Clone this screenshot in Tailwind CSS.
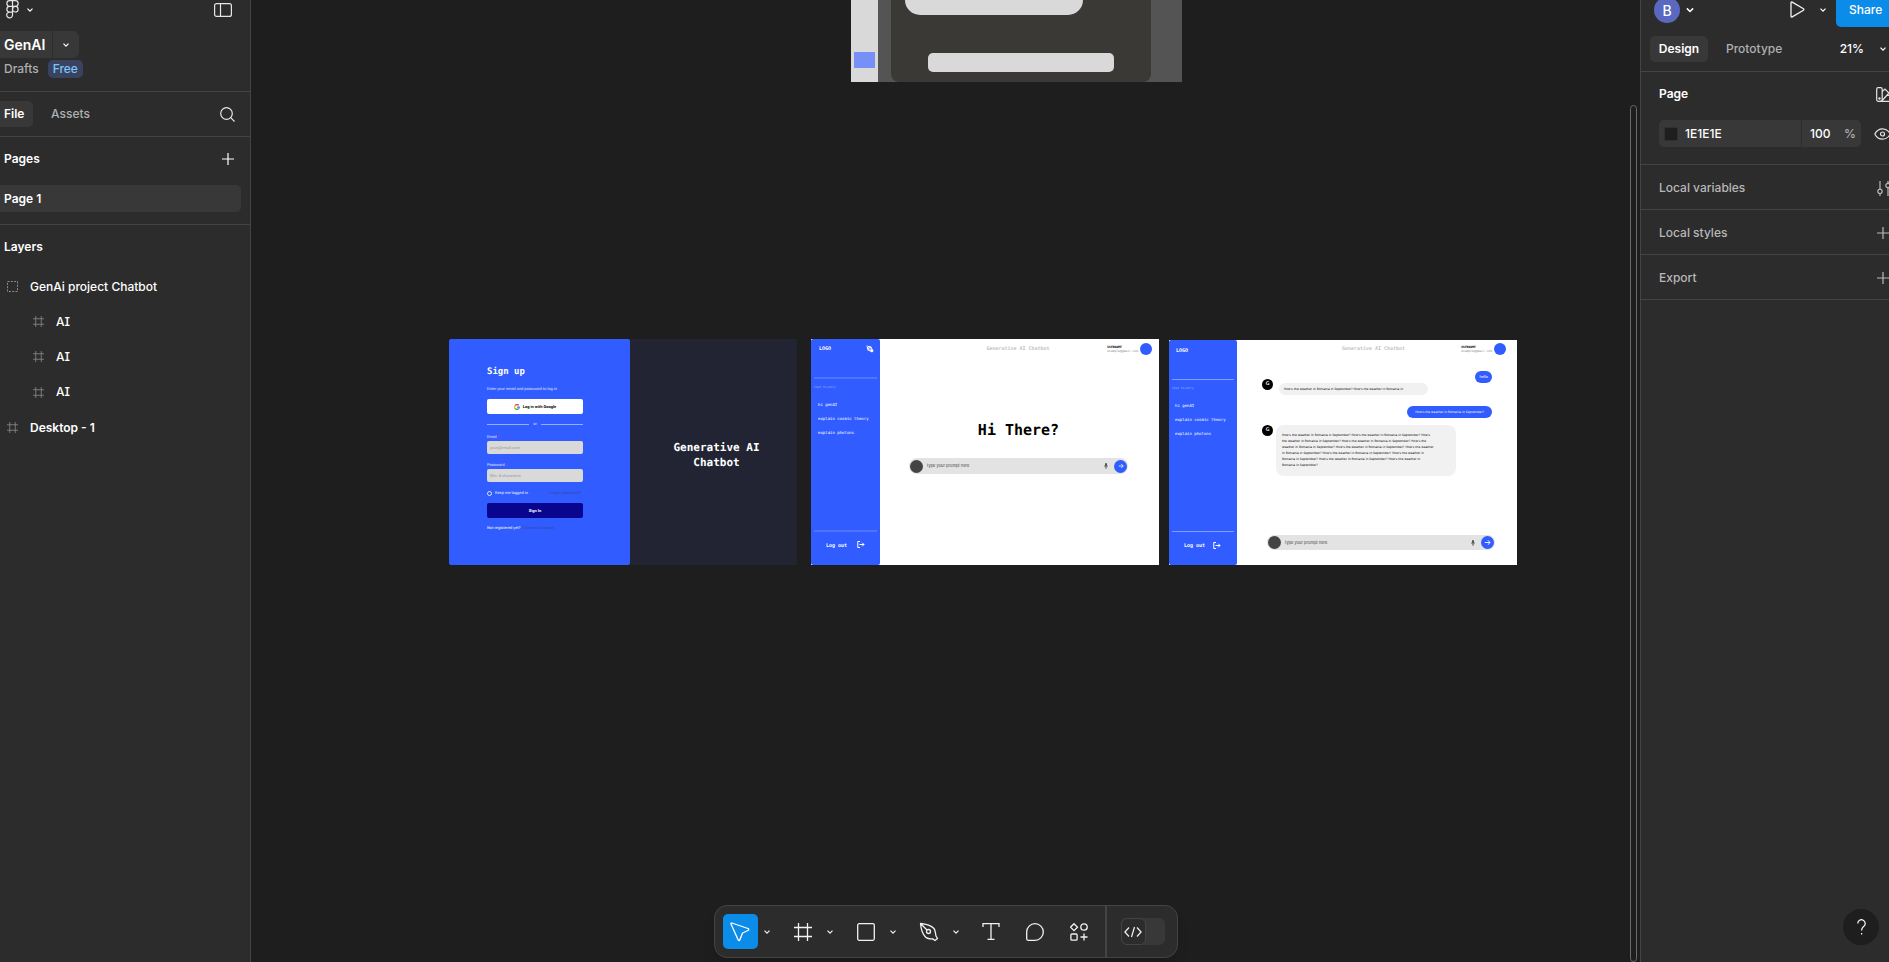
<!DOCTYPE html>
<html lang="en">
<head>
<meta charset="utf-8">
<title>GenAI</title>
<script src="https://cdn.jsdelivr.net/npm/@tailwindcss/browser@4"></script>
</head>
<body class="h-screen flex overflow-hidden bg-[#1e1e1e] text-white text-[12px] font-['Inter',sans-serif] font-medium">
<svg class="hidden">
  <symbol id="chev" viewBox="0 0 8 8"><path d="M1.500 2.700 4 5.200 6.500 2.700" fill="none" stroke="currentColor" stroke-width="1.200"/></symbol>
  <symbol id="plus" viewBox="0 0 14 14"><path d="M7 1v12M1 7h12" fill="none" stroke="currentColor" stroke-width="1.200"/></symbol>
  <symbol id="hash" viewBox="0 0 18 18"><path d="M4.500 0v18M13.500 0v18M0 4.500h18M0 13.500h18" fill="none" stroke="currentColor" stroke-width="1.300"/></symbol>
  <symbol id="pen" viewBox="0 0 20 20"><path d="M1.500 1.500C7 2 12 3.500 15 6.500c1.500 2 1.500 5 2 7.500l1.500 2.500-2.500 2-2-1.500c-2.500 0-5.500 0-7.500-2C3.500 12 2 7 1.500 1.500Zm0 0L8 8" fill="none" stroke="currentColor" stroke-width="1.300" stroke-linejoin="round"/><circle cx="9.500" cy="9.500" r="2" fill="none" stroke="currentColor" stroke-width="1.300"/></symbol>
  <symbol id="nib" viewBox="0 0 20 20"><path d="M1 1 13 4l4 8 2 3-4 4-3-2-8-4Z" fill="currentColor"/><path d="m2 2 7 7" stroke="#315cff" stroke-width="1.500"/><circle cx="10" cy="10" r="2.500" fill="none" stroke="#315cff" stroke-width="1.500"/></symbol>
  <symbol id="exit" viewBox="0 0 16 14"><path d="M6 1H1.500v12H6M5 7h9M10.500 3.500 14 7l-3.500 3.500" fill="none" stroke="currentColor" stroke-width="2"/></symbol>
  <symbol id="mic" viewBox="0 0 8 12"><rect x="2.200" y="0" width="3.600" height="7" rx="1.800" fill="currentColor"/><path d="M.8 5a3.200 3.200 0 0 0 6.400 0M4 8v4" fill="none" stroke="currentColor" stroke-width="1.300"/></symbol>
  <symbol id="arrow" viewBox="0 0 12 12"><path d="M1.500 6h9M6.500 2l4 4-4 4" fill="none" stroke="currentColor" stroke-width="1.500"/></symbol>
</svg>

<!-- Left panel -->
<aside class="w-[251px] shrink-0 bg-[#2c2c2c] border-r border-[#444] flex flex-col">
  <header class="border-b border-[#444] pb-[13px]">
    <div class="h-[31px] pl-1.5 pr-[18px] pb-3 flex items-center">
      <button aria-label="Main menu" class="flex items-center gap-[7px]">
        <svg class="w-[13px] h-[19px]" viewBox="0 0 13 19" fill="none" stroke="#e6e6e6" stroke-width="1.200"><path d="M6.500.700H3.700a2.800 2.800 0 0 0 0 5.700h2.800ZM6.500.700h2.800a2.800 2.800 0 0 1 0 5.700H6.500ZM6.500 6.400H3.700a2.800 2.800 0 0 0 0 5.700h2.800ZM6.500 12.100H3.700a2.900 2.900 0 1 0 2.800 2.900Z"/><circle cx="9.300" cy="9.200" r="2.800"/></svg>
        <svg class="size-2"><use href="#chev"/></svg>
      </button>
      <button aria-label="Minimize UI" class="ml-auto"><svg class="w-[18px] h-[14px]" viewBox="0 0 18 14" fill="none" stroke="#e6e6e6" stroke-width="1.200"><rect x=".6" y=".6" width="16.800" height="12.800" rx="2"/><path d="M6.500.600v12.800"/></svg></button>
    </div>
    <div class="flex gap-px h-[27px]">
      <button class="w-[52px] bg-[#383838] text-[14px] font-semibold text-left pl-1">GenAI</button>
      <button aria-label="File menu" class="w-[26px] rounded-r-md bg-[#383838] flex items-center justify-center"><svg class="size-2"><use href="#chev"/></svg></button>
    </div>
    <div class="mt-0.5 h-[18px] flex items-center pl-1 gap-[9px]">
      <a href="#drafts" class="text-[#b0b0b0]">Drafts</a>
      <span class="h-[18px] px-[5px] rounded-[5px] bg-[#394360] text-[#7cc4f8] leading-[18px]">Free</span>
    </div>
  </header>
  <div class="h-[45px] border-b border-[#444] flex items-center pr-[15px]">
    <button class="h-[26px] w-[33px] rounded-r-[5px] bg-[#383838] pl-1 text-left font-semibold">File</button>
    <button class="ml-[18px] text-[#b0b0b0]">Assets</button>
    <button aria-label="Search" class="ml-auto"><svg class="size-[15px]" viewBox="0 0 15 15" fill="none" stroke="#e6e6e6" stroke-width="1.200"><circle cx="6.500" cy="6.500" r="5.800"/><path d="m10.700 10.700 3.800 3.800"/></svg></button>
  </div>
  <section class="border-b border-[#444] pb-3">
    <div class="h-12 pb-1 flex items-center justify-between pl-1 pr-[15px]">
      <h2 class="font-semibold">Pages</h2>
      <button aria-label="Add page"><svg class="size-[14px]"><use href="#plus"/></svg></button>
    </div>
    <button class="h-[27px] w-[241px] pl-1 text-left rounded-r-[5px] bg-[#383838] font-semibold">Page 1</button>
  </section>
  <section>
    <h2 class="h-11 flex items-center pl-1 font-semibold">Layers</h2>
    <ul>
      <li class="h-[35px] flex items-center pl-[7px] gap-3"><svg class="size-[11px] text-[#8c8c8c]" viewBox="0 0 11 11"><rect x=".5" y=".5" width="10" height="10" fill="none" stroke="currentColor" stroke-dasharray="2 1.330"/></svg>GenAi project Chatbot</li>
      <li class="h-[35px] flex items-center pl-[33px] gap-3 [font-feature-settings:'cv08']"><svg class="size-[11px] text-[#8c8c8c]"><use href="#hash"/></svg>AI</li>
      <li class="h-[35px] flex items-center pl-[33px] gap-3 [font-feature-settings:'cv08']"><svg class="size-[11px] text-[#8c8c8c]"><use href="#hash"/></svg>AI</li>
      <li class="h-9 flex items-center pl-[33px] gap-3 [font-feature-settings:'cv08']"><svg class="size-[11px] text-[#8c8c8c]"><use href="#hash"/></svg>AI</li>
      <li class="h-[35px] flex items-center pl-[7px] gap-3 font-semibold"><svg class="size-[11px] text-[#8c8c8c]"><use href="#hash"/></svg>Desktop - 1</li>
    </ul>
  </section>
</aside>

<!-- Canvas -->
<main class="relative flex-1 min-w-0 overflow-hidden flex flex-col justify-end items-center pb-1">
  <!-- Desktop - 1 -->
  <div class="absolute left-[600px] top-0 w-[331px] h-[82px] bg-[#545454] flex">
    <div class="w-[27px] bg-[#d9d9d9] pt-[52px] pl-[3px]"><div class="w-[21px] h-4 bg-[#7790f8]"></div></div>
    <div class="ml-[13px] w-[260px] rounded-b-lg bg-[#3a3936]">
      <div class="ml-[14px] w-[178px] h-[15px] rounded-b-[15px] bg-[#d9d9d9]"></div>
      <div class="mt-[38px] ml-[37px] w-[186px] h-[19px] rounded-[5px] bg-[#d9d9d9]"></div>
    </div>
  </div>

  <!-- Sign up -->
  <div class="absolute left-[198px] top-[339px] w-[348px] h-[226px] bg-[#222433] flex text-[4px] font-normal font-['Roboto',sans-serif] [text-rendering:geometricPrecision]">
    <form class="w-[181px] rounded-[2px] bg-[#315cff] pt-[27px] pl-[38px] pr-[47px] flex flex-col leading-[6px]">
      <h3 class="text-[9px] leading-[12px] font-bold font-['DejaVu_Sans_Mono',monospace]">Sign up</h3>
      <p class="mt-2 text-white/80">Enter your email and password to log in</p>
      <button type="button" class="mt-[7px] h-[15px] rounded-[2px] bg-white text-black font-bold flex items-center justify-center gap-[3px]">
        <svg class="size-[6px]" viewBox="0 0 24 24" fill="none" stroke-width="5"><path d="M19 5a9.500 9.500 0 0 0-15 2" stroke="#ea4335"/><path d="M4 7a9.500 9.500 0 0 0 0 10" stroke="#fbbc05"/><path d="M4 17a9.500 9.500 0 0 0 14 2" stroke="#34a853"/><path d="M18 19a9 9 0 0 0 3.500-7H12" stroke="#4285f4"/></svg>Log in with Google</button>
      <div class="mt-[7px] flex items-center gap-1 text-white/80"><span class="h-px flex-1 bg-white/50"></span>or<span class="h-px flex-1 bg-white/50"></span></div>
      <label for="email" class="mt-[7px] text-white/80">Email<span class="text-red-600">*</span></label>
      <input id="email" type="email" placeholder="your@email.com" class="mt-px h-[13px] px-[3px] rounded-[2px] bg-[#d9d9d9] placeholder:text-[#999]">
      <label for="pw" class="mt-2 text-white/80">Password<span class="text-red-600">*</span></label>
      <input id="pw" type="password" placeholder="Min. 8 characters" class="mt-px h-[13px] px-[3px] rounded-[2px] bg-[#d9d9d9] placeholder:text-[#999]">
      <div class="mt-2 flex items-center justify-between pr-[2px]">
        <label class="flex items-center gap-[3px] text-white/90"><input type="checkbox" class="appearance-none size-[5px] rounded-full border border-white/80">Keep me logged in</label>
        <a href="#forgot" class="text-[#354a9c]">Forget password?</a>
      </div>
      <button type="button" class="mt-[7px] h-[15px] rounded-[2px] bg-[#09058f] font-bold">Sign In</button>
      <p class="mt-[7px]">Not registered yet? <a href="#create" class="text-[#354a9c]">Create an Account</a></p>
    </form>
    <div class="flex-1 flex items-center justify-center text-center pt-[5px] pl-[6px] text-[11px] leading-[15px] font-bold font-['DejaVu_Sans_Mono',monospace]">Generative AI<br>Chatbot</div>
  </div>

  <!-- Prompt screen -->
  <div class="absolute left-[560px] top-[339px] w-[348px] h-[226px] bg-white flex text-[4px] leading-[6px] font-normal font-['DejaVu_Sans_Mono',monospace] [text-rendering:geometricPrecision]">
    <div class="w-[69px] rounded-[2px] bg-[#315cff] flex flex-col">
      <div class="h-[38px] pt-[6px] pl-2 pr-[6px] flex justify-between text-[5px] font-bold"><span class="leading-[9px]">LOGO</span><svg class="size-2"><use href="#nib"/></svg></div>
      <div class="mx-[3px] h-[2px] bg-white/15"></div>
      <p class="mt-[5px] ml-[3px] text-[3px] text-white/50">Chat history</p>
      <ul class="mt-2 ml-[7px] leading-[14px] whitespace-nowrap"><li>hi genAI</li><li>explain cosmic theory</li><li>explain photons</li></ul>
      <div class="mt-auto mx-[3px] h-[2px] bg-white/15"></div>
      <button class="h-[33px] pb-2 pl-[15px] flex items-center gap-[10px] text-[5px] font-bold">Log out<svg class="w-2 h-[7px]"><use href="#exit"/></svg></button>
    </div>
    <div class="flex-1 flex flex-col text-black">
      <div class="grid grid-cols-[1fr_auto_1fr] items-center h-5 pr-[7px]">
        <span></span><span class="text-[5px] text-[#c4c4c4] font-bold pl-1">Generative AI Chatbot</span>
        <div class="flex justify-end items-center gap-[2px] text-[3px] leading-[4px]"><div><b>USERNAME</b><br><span class="text-[#888]">example@gmail.com</span></div><div class="size-3 rounded-full bg-[#315cff]"></div></div>
      </div>
      <h3 class="mt-[62px] pr-0.5 text-center text-[15px] leading-[18px] font-bold">Hi There?</h3>
      <div class="mt-[19px] ml-[29px] mr-[31px] h-4 rounded-full bg-[#e3e3e3] flex items-center px-px gap-1 font-['Inter',sans-serif]">
        <div class="size-[13px] rounded-full bg-[#444]"></div>
        <input aria-label="Prompt" placeholder="type your prompt here" class="flex-1 min-w-0 placeholder:text-[#444]">
        <svg class="w-1 h-[6px] mr-0.5 text-[#444]"><use href="#mic"/></svg>
        <button aria-label="Send" class="size-[13px] rounded-full bg-[#315cff] text-white flex items-center justify-center"><svg class="size-[6px]"><use href="#arrow"/></svg></button>
      </div>
    </div>
  </div>

  <!-- Conversation screen -->
  <div class="absolute left-[918px] top-[340px] w-[348px] h-[225px] bg-white flex text-[4px] leading-[6px] font-normal font-['DejaVu_Sans_Mono',monospace] [text-rendering:geometricPrecision]">
    <div class="w-[68px] rounded-[2px] bg-[#315cff] flex flex-col">
      <div class="h-[39px] pt-[7px] pl-[7px] text-[5px] font-bold"><span class="leading-[9px]">LOGO</span></div>
      <div class="mx-[3px] h-px bg-white/40"></div>
      <p class="mt-[5px] ml-[3px] text-[3px] text-white/50">Chat history</p>
      <ul class="mt-2 ml-[6px] leading-[14px] whitespace-nowrap"><li>hi genAI</li><li>explain cosmic theory</li><li>explain photons</li></ul>
      <div class="mt-auto mx-[3px] h-px bg-white/40"></div>
      <button class="h-[33px] pb-[7px] pl-[15px] flex items-center gap-2 text-[5px] font-bold">Log out<svg class="w-2 h-[7px]"><use href="#exit"/></svg></button>
    </div>
    <div class="flex-1 flex flex-col text-black">
      <div class="grid grid-cols-[1fr_auto_1fr] items-center h-[18px] pr-[11px]">
        <span></span><span class="text-[5px] text-[#c4c4c4] font-bold pl-1">Generative AI Chatbot</span>
        <div class="flex justify-end items-center gap-[2px] text-[3px] leading-[4px]"><div><b>USERNAME</b><br><span class="text-[#888]">example@gmail.com</span></div><div class="size-3 rounded-full bg-[#315cff]"></div></div>
      </div>
      <div class="flex flex-col pl-[25px] pr-[25px] pt-[13px] text-[3px] font-['DejaVu_Sans',sans-serif]">
        <div class="self-end h-3 px-1 rounded-full bg-[#315cff] text-white text-[4px] leading-[12px] font-['Lato',sans-serif]">hello</div>
        <div class="-mt-1 flex items-start gap-[6px]">
          <div class="size-[11px] rounded-full bg-black text-white text-[5px] leading-[11px] text-center font-bold font-['Lato',sans-serif]">G</div>
          <p class="mt-1 h-3 w-[149px] pl-[5px] rounded-full bg-[#f1f1f1] leading-[12px] whitespace-nowrap">How's the weather in Romania in September? How's the weather in Romania in</p>
        </div>
        <div class="mt-[11px] self-end h-3 px-2 rounded-full bg-[#315cff] text-white leading-[12px]">How's the weather in Romania in September?</div>
        <div class="mt-[7px] flex items-start gap-[3px]">
          <div class="size-[11px] rounded-full bg-black text-white text-[5px] leading-[11px] text-center font-bold font-['Lato',sans-serif]">G</div>
          <p class="h-[51px] w-[180px] pl-[6px] pt-[7px] rounded-[8px] bg-[#f1f1f1] whitespace-nowrap">How's the weather in Romania in September? How's the weather in Romania in September? How's<br>the weather in Romania in September? How's the weather in Romania in September? How's the<br>weather in Romania in September? How's the weather in Romania in September? How's the weather<br>in Romania in September? How's the weather in Romania in September? How's the weather in<br>Romania in September? How's the weather in Romania in September? How's the weather in<br>Romania in September?</p>
        </div>
      </div>
      <div class="mt-auto mb-[15px] ml-[30px] mr-[22px] h-[15px] rounded-full bg-[#e3e3e3] flex items-center px-px gap-1 font-['Inter',sans-serif]">
        <div class="size-[13px] rounded-full bg-[#444]"></div>
        <input aria-label="Message" placeholder="type your prompt here" class="flex-1 min-w-0 placeholder:text-[#444]">
        <svg class="w-1 h-[6px] mr-0.5 text-[#444]"><use href="#mic"/></svg>
        <button aria-label="Send" class="size-[13px] rounded-full bg-[#315cff] text-white flex items-center justify-center"><svg class="size-[7px]"><use href="#arrow"/></svg></button>
      </div>
    </div>
  </div>

  <div class="absolute right-[3px] top-[105px] bottom-0 w-[7px] rounded-full border border-[#6a6a6a]"></div>

  <!-- Toolbar -->
  <nav class="relative h-[53px] rounded-[13px] border border-[#444] bg-[#2c2c2c] flex items-center pl-2 pr-3 shadow-lg text-[#f2f2f2]">
    <button aria-label="Move" class="size-[35px] rounded-[5px] bg-[#0c8ce9] flex items-center justify-center"><svg class="size-5" viewBox="0 0 20 20" fill="none" stroke="#fff" stroke-width="1.300" stroke-linejoin="round"><path d="M1.800 1 18 6.500c1 .4 1 1.500 0 2L12.500 11l-2.600 6.800c-.4 1-1.400 1-1.800 0L1 2C.7 1.200 1.200.800 1.800 1Z"/></svg></button>
    <button aria-label="Move tools" class="w-[18px] flex justify-center"><svg class="size-2"><use href="#chev"/></svg></button>
    <button aria-label="Frame" class="ml-[18px] w-[18px]"><svg class="size-[18px]"><use href="#hash"/></svg></button>
    <button aria-label="Frame tools" class="w-[36px] flex justify-center"><svg class="size-2"><use href="#chev"/></svg></button>
    <button aria-label="Rectangle" class="ml-[9px] w-[18px]"><svg class="size-[18px]" viewBox="0 0 18 18"><rect x=".7" y=".7" width="16.600" height="16.600" rx="1.500" fill="none" stroke="currentColor" stroke-width="1.300"/></svg></button>
    <button aria-label="Shape tools" class="w-[36px] flex justify-center"><svg class="size-2"><use href="#chev"/></svg></button>
    <button aria-label="Pen" class="ml-2 w-5"><svg class="size-5"><use href="#pen"/></svg></button>
    <button aria-label="Pen tools" class="w-[34px] flex justify-center"><svg class="size-2"><use href="#chev"/></svg></button>
    <button aria-label="Text" class="ml-[9px] w-[18px]"><svg class="w-[18px] h-[17px]" viewBox="0 0 18 17" fill="none" stroke="currentColor" stroke-width="1.300"><path d="M1 4V.700h16V4M9 .700v15.600M5.500 16.300h7"/></svg></button>
    <button aria-label="Comment" class="ml-[26px] w-[18px]"><svg class="size-[18px]" viewBox="0 0 18 18" fill="none" stroke="currentColor" stroke-width="1.300"><path d="M9 .700a8.300 8.300 0 0 1 0 16.600H2.200A1.500 1.500 0 0 1 .700 15.800V9A8.300 8.300 0 0 1 9 .700Z"/></svg></button>
    <button aria-label="Actions" class="ml-[26px] w-[18px]"><svg class="size-[18px]" viewBox="0 0 18 18" fill="none" stroke="currentColor" stroke-width="1.300"><path d="m4 .700 3.500 3.500L4 7.700.500 4.200ZM14 10.500v7M10.500 14h7"/><circle cx="14" cy="4" r="3.200"/><rect x=".9" y="11" width="6.200" height="6.200" rx="1"/></svg></button>
    <span class="ml-[17px] w-0.5 h-full bg-[#444]"></span>
    <button aria-label="Dev Mode" role="switch" aria-checked="false" class="ml-[14px] w-[44px] h-[27px] rounded-md bg-[#383838] flex"><span class="w-[25px] h-[27px] rounded-md bg-[#2c2c2c] border border-[#444] flex items-center justify-center"><svg class="w-[18px] h-3" viewBox="0 0 18 12" fill="none" stroke="#f2f2f2" stroke-width="1.200"><path d="M5 1.500.900 6 5 10.500M13 1.500 17.100 6 13 10.500M10.500 1l-3 10"/></svg></span></button>
  </nav>
</main>

<!-- Right panel -->
<aside class="relative w-[249px] shrink-0 overflow-hidden bg-[#2c2c2c] border-l border-[#444]">
  <div class="w-[263px]">
    <div class="h-[27px] flex items-start pl-[13px]">
      <div class="size-[26px] -mt-[3px] rounded-full bg-[#5b68c0] flex items-center justify-center text-[14px]">B</div>
      <svg class="size-[10px] ml-[5px] mt-[5px]"><use href="#chev"/></svg>
      <button aria-label="Present" class="ml-[95px] mt-px"><svg class="w-[15px] h-[17px]" viewBox="0 0 15 17" fill="none" stroke="#f2f2f2" stroke-width="1.300" stroke-linejoin="round"><path d="M1 1.800v13.400c0 .7.600 1 1.200.7L13.500 9.300c.5-.3.500-1.200 0-1.500L2.200 1.100C1.600.800 1 1.100 1 1.800Z"/></svg></button>
      <svg class="size-2 ml-[14px] mt-1.5"><use href="#chev"/></svg>
      <button class="ml-auto h-[27px] w-[68px] pl-[13px] pb-2 text-left rounded-bl-[5px] bg-[#0c8ce9]">Share</button>
    </div>
    <div class="h-[45px] border-b border-[#444] flex items-center pl-[9px]">
      <button class="h-[26px] w-[58px] rounded-[5px] bg-[#383838] font-semibold">Design</button>
      <button class="ml-[18px] text-[#b0b0b0]">Prototype</button>
      <button class="ml-auto pr-[17px] flex items-center gap-[15px]">21%<svg class="size-2"><use href="#chev"/></svg></button>
    </div>
    <section class="h-[93px] border-b border-[#444] pl-[18px]">
      <div class="h-12 pb-1 flex items-center">
        <h2 class="font-semibold">Page</h2>
        <button aria-label="Styles" class="ml-auto pr-2.5"><svg class="w-[18px] h-[15px]" viewBox="0 0 18 15" fill="none" stroke="#e6e6e6" stroke-width="1.200"><rect x=".7" y=".7" width="5.500" height="13.600" rx="1.500"/><path d="M6.200 4.500 9 2l4 4-6.800 7.500M11 8.500h5v5.800H4"/><circle cx="3.500" cy="11.500" r=".6"/></svg></button>
      </div>
      <div class="flex items-center">
        <div class="flex w-[202px] h-[27px] gap-px rounded-[5px] overflow-hidden">
          <label class="w-[142px] bg-[#383838] flex items-center pl-[5px] gap-[7px]"><span class="size-[14px] bg-[#1e1e1e] border border-[#303030]"></span><input aria-label="Page color" value="1E1E1E" class="w-24"></label>
          <label class="flex-1 bg-[#383838] flex items-center pl-2 text-[#b0b0b0]"><input aria-label="Opacity" value="100" class="w-[34px] text-white">%</label>
        </div>
        <button aria-label="Visible" class="ml-[13px]"><svg class="w-[17px] h-3" viewBox="0 0 17 12" fill="none" stroke="#e6e6e6" stroke-width="1.200"><path d="M.8 6C2.500 2.700 5.200.800 8.500.800S14.500 2.700 16.200 6c-1.700 3.300-4.400 5.200-7.700 5.200S2.500 9.300.800 6Z"/><circle cx="8.500" cy="6" r="2"/></svg></button>
      </div>
    </section>
    <section class="h-[45px] pt-0.5 border-b border-[#444] pl-[18px] pr-2.5 flex items-center justify-between text-[#b8b8b8]"><h2>Local variables</h2><button aria-label="Variables"><svg class="w-[17px] h-[15px]" viewBox="0 0 17 15" fill="none" stroke="currentColor" stroke-width="1.200"><path d="M3 0v8M3 12.500V15M11 0v2M11 7v8"/><circle cx="3" cy="10.300" r="2.200"/><circle cx="11" cy="4.500" r="2.200"/></svg></button></section>
    <section class="h-[45px] pt-0.5 border-b border-[#444] pl-[18px] pr-[14px] flex items-center justify-between text-[#b8b8b8]"><h2>Local styles</h2><button aria-label="Add style"><svg class="size-[14px]"><use href="#plus"/></svg></button></section>
    <section class="h-[45px] pt-0.5 border-b border-[#444] pl-[18px] pr-[14px] flex items-center justify-between text-[#b8b8b8]"><h2>Export</h2><button aria-label="Add export"><svg class="size-[14px]"><use href="#plus"/></svg></button></section>
  </div>
  <button aria-label="Help" class="absolute right-2.5 bottom-[17px] size-9 rounded-full bg-[#1e1e1e] flex items-center justify-center"><svg class="w-[9px] h-4" viewBox="0 0 9 16" fill="none" stroke="#fff" stroke-width="1.200"><path d="M.8 4.500a3.700 3.700 0 1 1 5.800 3C5 8.600 4.600 9.500 4.600 11.500"/><path d="M4.600 14v1.500"/></svg></button>
</aside>
</body>
</html>
